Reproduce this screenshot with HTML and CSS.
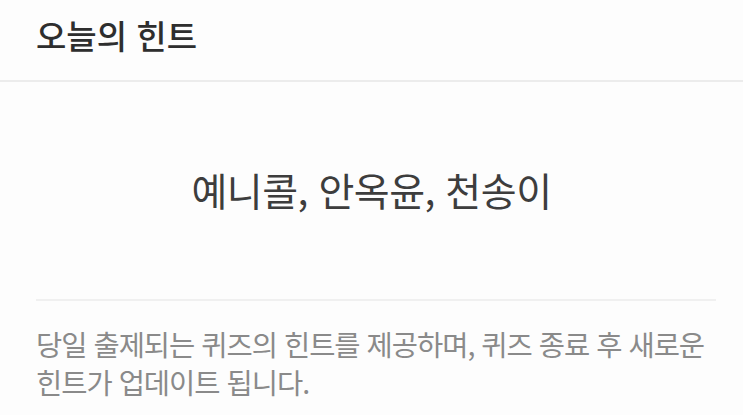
FILE: index.html
```html
<!DOCTYPE html>
<html lang="ko">
<head>
<meta charset="utf-8">
<link rel="stylesheet" href="styles.css">
</head>
<body>
<div class="page">
  <header class="header"><h1 class="title">오늘의 힌트</h1></header>
  <main class="answer"><p class="answer-text">예니콜, 안옥윤, 천송이</p></main>
  <div class="divider"></div>
  <p class="desc">당일 출제되는 퀴즈의 힌트를 제공하며, 퀴즈 종료 후 새로운 힌트가 업데이트 됩니다.</p>
</div>
</body>
</html>
```
FILE: styles.css
```css
html, body { margin: 0; padding: 0; background: #fdfdfd; }
.page { width: 743px; height: 415px; overflow: hidden; font-family: "Noto Sans CJK KR", "Noto Sans", sans-serif; }
.header { border-bottom: 2px solid #ececec; display: flex; align-items: center; padding-left: 36px; box-sizing: border-box; height: 82px; }
.title { margin: 0 0 10px; font-size: 33px; font-weight: 500; color: #2e2e2e; letter-spacing: 0; }
.answer { height: 217px; display: flex; align-items: center; justify-content: center; }
.answer-text { margin: 0 0 4px; font-size: 39px; font-weight: 400; color: #3d3d3d; letter-spacing: -0.5px; }
.divider { margin: 0 27px 0 36px; border-top: 2px solid #f0f0f0; }
.desc { margin: 24px 28px 0 36px; font-size: 28.5px; line-height: 38px; color: #8a8a8a; letter-spacing: -1px; word-break: keep-all; }
```
